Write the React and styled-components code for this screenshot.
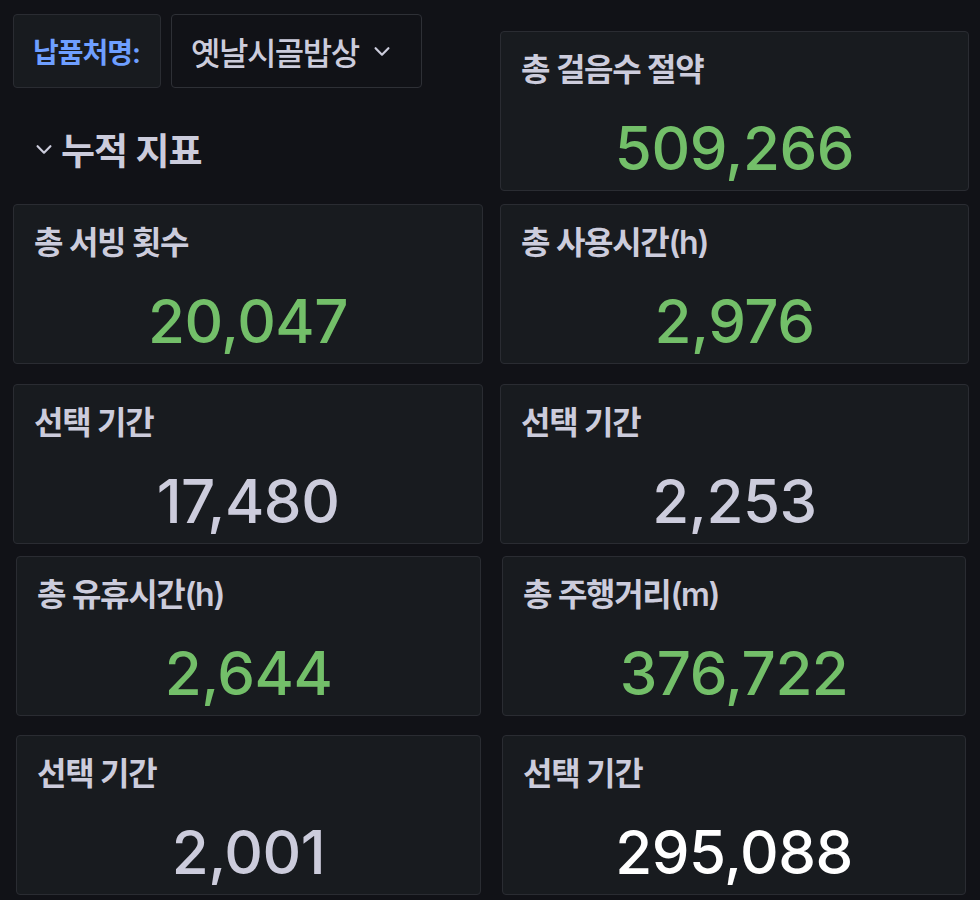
import styled, { createGlobalStyle } from "styled-components";

const GlobalStyle = createGlobalStyle`
  html, body {
    margin: 0;
    background: #111217;
  }
  body {
    font-family: Inter, "Noto Sans CJK KR", sans-serif;
    color: #ccccdc;
  }
`;

const Page = styled.div`
  width: 980px;
  min-height: 900px;
  box-sizing: border-box;
  padding: 14px 11px 0 13px;
  background: #111217;
`;

const Grid = styled.div`
  display: grid;
  grid-template-columns: 470px 469px;
  column-gap: 17px;
`;

const Row = styled.div`
  display: contents;
`;

const HeaderStack = styled.div`
  display: flex;
  flex-direction: column;
`;

const Toolbar = styled.div`
  display: flex;
  gap: 10px;
  height: 74px;
`;

const FilterLabel = styled.div`
  display: flex;
  align-items: center;
  box-sizing: border-box;
  width: 148px;
  padding: 0 19px;
  background: #181b1f;
  border: 1px solid #2a2c32;
  border-radius: 4px;
  color: #6e9fff;
  font-size: 28px;
  font-weight: 600;
  letter-spacing: -1px;
  white-space: nowrap;
`;

const Select = styled.div`
  display: flex;
  align-items: center;
  gap: 12px;
  box-sizing: border-box;
  width: 251px;
  padding: 0 19px;
  background: #111217;
  border: 1px solid #2e3036;
  border-radius: 4px;
  color: #ccccdc;
  font-size: 32px;
  font-weight: 500;
  letter-spacing: -1.5px;
  white-space: nowrap;
`;

const SectionTitle = styled.div`
  display: flex;
  align-items: center;
  gap: 6px;
  margin-top: 34px;
  padding-left: 20px;
  color: #ccccdc;
  font-size: 37px;
  font-weight: 600;
  letter-spacing: -1px;
`;

const Panel = styled.div`
  display: flex;
  flex-direction: column;
  box-sizing: border-box;
  height: 160px;
  margin: ${(p) => p.$margin || "0"};
  padding: 20px 20px 0;
  background: #181b1f;
  border: 1px solid #2a2c32;
  border-radius: 4px;
`;

const PanelTitle = styled.div`
  color: #ccccdc;
  font-size: 32px;
  font-weight: 600;
  line-height: 36px;
  letter-spacing: -1.3px;
  white-space: nowrap;
`;

const Value = styled.div`
  flex: 1;
  display: flex;
  align-items: center;
  justify-content: center;
  padding-top: 18px;
  color: ${(p) => p.$color};
  font-size: 60px;
  font-weight: 500;
  letter-spacing: -0.5px;
`;

const colors = {
  green: "#73bf69",
  text: "#ccccdc",
  white: "#ffffff",
};

const Chevron = ({ size = 14 }) => (
  <svg width={size} height={size} viewBox="0 0 24 24" fill="none" stroke="currentColor" strokeWidth="2.4" strokeLinecap="round" strokeLinejoin="round">
    <polyline points="5 9 12 16 19 9" />
  </svg>
);

const Stat = ({ title, value, color, margin }) => (
  <Panel $margin={margin}>
    <PanelTitle>{title}</PanelTitle>
    <Value $color={colors[color]}>{value}</Value>
  </Panel>
);

const rows = [
  {
    top: "13px",
    cells: [
      { title: "총 서빙 횟수", value: "20,047", color: "green" },
      { title: "총 사용시간(h)", value: "2,976", color: "green" },
    ],
  },
  {
    top: "20px",
    cells: [
      { title: "선택 기간", value: "17,480", color: "text" },
      { title: "선택 기간", value: "2,253", color: "text" },
    ],
  },
  {
    top: "12px",
    cells: [
      { title: "총 유휴시간(h)", value: "2,644", color: "green", side: "0 2px 0 3px" },
      { title: "총 주행거리(m)", value: "376,722", color: "green", side: "0 3px 0 2px" },
    ],
  },
  {
    top: "19px",
    cells: [
      { title: "선택 기간", value: "2,001", color: "text", side: "0 2px 0 3px" },
      { title: "선택 기간", value: "295,088", color: "white", side: "0 3px 0 2px" },
    ],
  },
];

export default function App() {
  return (
    <>
      <GlobalStyle />
      <Page>
        <Grid>
          <HeaderStack>
            <Toolbar>
              <FilterLabel>납품처명:</FilterLabel>
              <Select>
                옛날시골밥상
                <Chevron size={22} />
              </Select>
            </Toolbar>
            <SectionTitle>
              <Chevron size={22} />
              누적 지표
            </SectionTitle>
          </HeaderStack>
          <Stat title="총 걸음수 절약" value="509,266" color="green" margin="17px 0 0" />
          {rows.map((row, i) => (
            <Row key={i}>
              {row.cells.map((c, j) => {
                const [, r, b, l] = (c.side || "0 0 0 0").split(" ");
                return (
                  <Stat
                    key={j}
                    title={c.title}
                    value={c.value}
                    color={c.color}
                    margin={`${row.top} ${r} ${b} ${l}`}
                  />
                );
              })}
            </Row>
          ))}
        </Grid>
      </Page>
    </>
  );
}
